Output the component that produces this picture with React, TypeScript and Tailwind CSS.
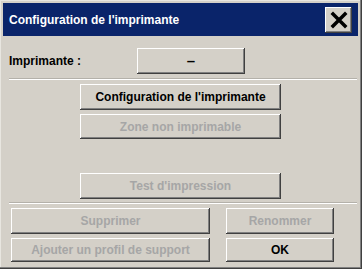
import React from "react";

const raised =
  "shadow-[inset_-1px_-1px_#404040,inset_1px_1px_#ffffff,inset_-2px_-2px_#808080]";

const Btn = ({
  label,
  className,
  disabled,
}: {
  label: string;
  className: string;
  disabled?: boolean;
}) => (
  <div
    className={`flex items-center justify-center bg-[#d4d0c8] text-[12px] font-bold ${raised} ${
      disabled ? "text-[#a6a6a6]" : "text-black"
    } ${className}`}
  >
    {label}
  </div>
);

const Separator = ({ className }: { className: string }) => (
  <div className={`h-[2px] border-t border-[#b4b1aa] border-b border-b-white ${className}`} />
);

export default function App() {
  return (
    <div
      className="w-[362px] h-[269px] bg-[#d4d0c8] pt-[3px] pl-[3px] pr-[4px] shadow-[inset_-1px_-1px_#404040,inset_-2px_-2px_#808080,inset_1px_1px_#e8e6e0]"
      style={{ fontFamily: "'Liberation Sans', Arial, sans-serif" }}
    >
      <div className="flex items-center justify-between h-[33px] bg-[#0a246a] pl-[6px] pr-[6px]">
        <span className="text-white text-[12px] font-bold leading-none">
          Configuration de l'imprimante
        </span>
        <div className={`flex items-center justify-center w-[27px] h-[26px] bg-[#d4d0c8] ${raised}`}>
          <svg width="18" height="18" viewBox="0 0 18 18">
            <path d="M3 3 L15 15 M15 3 L3 15" stroke="black" strokeWidth="3.5" strokeLinecap="square" />
          </svg>
        </div>
      </div>

      <div className="flex items-center h-[26px] mt-[12px] pl-[6px]">
        <span className="w-[128px] text-[12px] font-bold text-black">Imprimante :</span>
        <Btn label="–" className="w-[108px] h-[26px] text-[15px]" />
      </div>

      <Separator className="mt-[4px] ml-[6px] mr-[1px]" />

      <div className="flex flex-col items-center mt-[4px]">
        <Btn label="Configuration de l'imprimante" className="w-[201px] h-[26px]" />
        <Btn label="Zone non imprimable" className="w-[201px] h-[25px] mt-[4px]" disabled />
        <Btn label="Test d'impression" className="w-[201px] h-[26px] mt-[34px]" disabled />
      </div>

      <Separator className="mt-[3px] ml-[6px] mr-[1px]" />

      <div className="flex flex-col gap-[4px] mt-[4px] pl-[8px]">
        <div className="flex gap-[16px]">
          <Btn label="Supprimer" className="w-[199px] h-[26px]" disabled />
          <Btn label="Renommer" className="w-[108px] h-[26px]" disabled />
        </div>
        <div className="flex gap-[16px]">
          <Btn label="Ajouter un profil de support" className="w-[199px] h-[24px]" disabled />
          <Btn label="OK" className="w-[108px] h-[24px]" />
        </div>
      </div>
    </div>
  );
}
